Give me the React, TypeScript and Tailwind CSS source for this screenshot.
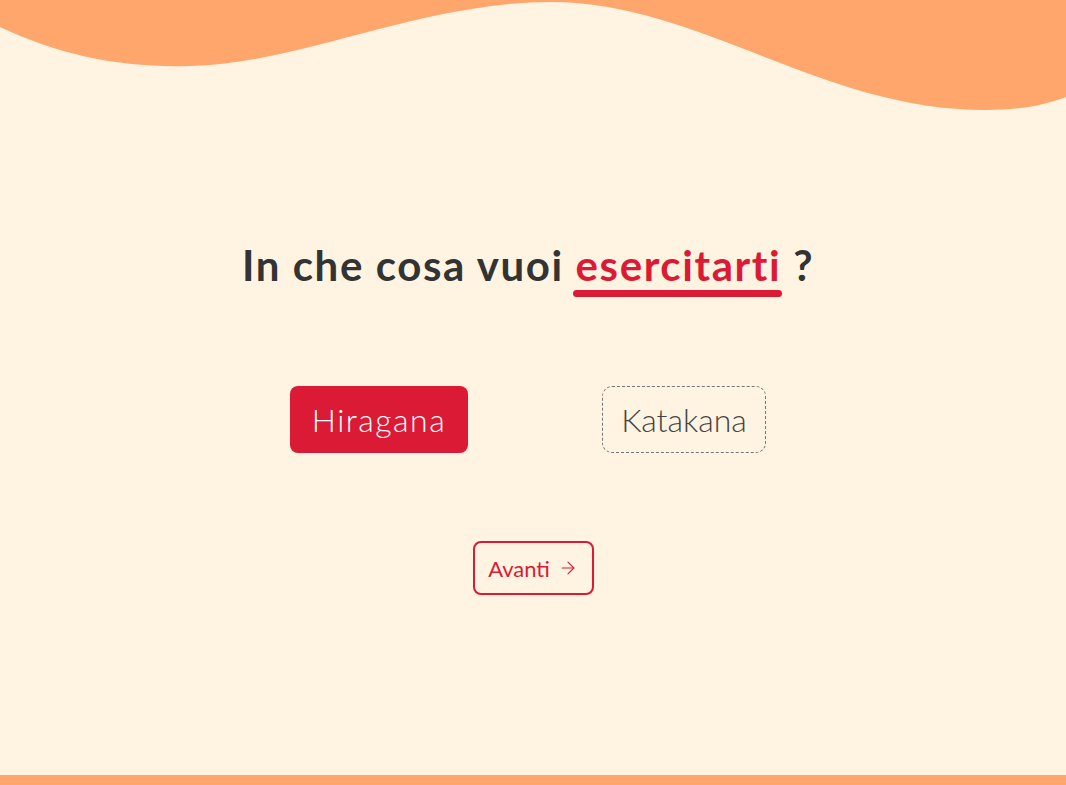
import React from "react";
import { ArrowRight } from "lucide-react";

const font = { fontFamily: "Lato, 'Noto Sans', sans-serif" };

const Wave = () => (
  <svg
    className="block w-full h-[112px] shrink-0"
    viewBox="0 0 1066 112"
    preserveAspectRatio="none"
    xmlns="http://www.w3.org/2000/svg"
  >
    <path
      d="M0 27 C60 55 120 68 190 66 C300 64 420 2 551 2 C700 2 820 110 986 110 C1020 110 1045 105 1066 97 L1066 0 L0 0 Z"
      fill="#FFA66C"
    />
  </svg>
);

const App = () => {
  return (
    <div
      className="w-full h-[785px] bg-[#FFF3E1] flex flex-col items-center overflow-hidden"
      style={font}
    >
      <Wave />
      <h1 className="mt-[128px] pr-[10px] text-[42px] leading-[50px] font-bold text-[#333333] tracking-[1.6px]">
        In che cosa vuoi{" "}
        <span className="relative inline-block text-[#DB1A35]">
          esercitarti
          <span className="absolute left-[-3px] right-[-1px] bottom-[-7px] h-[7px] rounded-full bg-[#DB1A35]" />
        </span>{" "}
        ?
      </h1>

      <div className="mt-[96px] flex items-center gap-[134px] pr-[10px]">
        <button className="w-[178px] h-[67px] rounded-lg bg-[#DB1A35] text-white text-[32px] font-light tracking-[1.5px] flex items-center justify-center">
          Hiragana
        </button>
        <button className="w-[164px] h-[67px] rounded-[10px] border border-dashed border-[#777] text-[#444] text-[32px] font-light flex items-center justify-center">
          Katakana
        </button>
      </div>

      <button className="mt-[88px] w-[121px] h-[54px] rounded-lg border-2 border-[#DB1A35] text-[#DB1A35] text-[22px] flex items-center justify-center gap-2">
        Avanti
        <ArrowRight size={20} strokeWidth={1.3} />
      </button>

      <div className="flex-1" />
      <div className="w-full h-[10px] bg-[#FFA66C] shrink-0" />
    </div>
  );
};

export default App;
